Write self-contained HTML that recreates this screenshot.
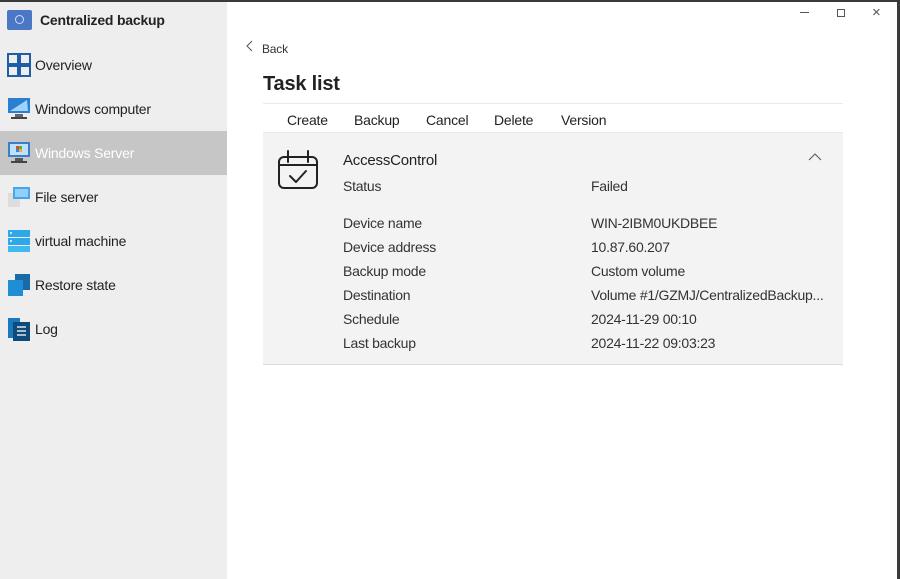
<!DOCTYPE html>
<html><head><meta charset="utf-8"><style>
*{margin:0;padding:0;box-sizing:border-box}
body{width:900px;height:579px;overflow:hidden;background:#3a3a3a;font-family:"Segoe UI","Liberation Sans",sans-serif;position:relative}
#win{position:absolute;left:0;top:2px;width:897px;height:577px;background:#fff}
#side{position:absolute;left:0;top:0;width:227px;height:577px;background:#eeeeee}
.it{position:absolute;left:0;width:227px;height:44px;font-size:14px;color:#222}
.it .t{position:absolute;left:35px;top:14px;letter-spacing:-0.2px}
.it svg{position:absolute;left:7px;top:10px}
.sel{background:#c6c6c6;color:#fff}
.t2{position:absolute;font-size:14px;color:#222;margin-top:2px;letter-spacing:-0.2px}
.lab{position:absolute;left:343px;font-size:14px;color:#333;margin-top:1px;letter-spacing:-0.25px}
.val{position:absolute;left:591px;font-size:14px;color:#333;margin-top:1px;letter-spacing:-0.25px}
</style></head><body>
<div id="win">
<div id="side">
 <div style="position:absolute;left:7px;top:8px;width:25px;height:20px;background:#4a78c5;border-radius:2px"><div style="position:absolute;left:8px;top:5px;width:9px;height:9px;border:1.5px solid #cfe0ff;border-radius:50%"></div></div>
 <div style="position:absolute;left:40px;top:10px;font-size:14px;font-weight:bold;color:#222;letter-spacing:-0.2px">Centralized backup</div>
 <div class="it" style="top:41px"><svg width="24" height="24"><g fill="none" stroke="#1e5ea8" stroke-width="2"><rect x="1" y="1" width="10" height="10"/><rect x="13" y="1" width="10" height="10"/><rect x="1" y="13" width="10" height="10"/><rect x="13" y="13" width="10" height="10"/></g></svg><span class="t">Overview</span></div>
 <div class="it" style="top:85px"><svg width="24" height="24"><rect x="1" y="1" width="22" height="15" fill="#2a7fd0"/><path d="M3 14 L20 3 L21 14Z" fill="#9fd3ff"/><rect x="8" y="17" width="8" height="3" fill="#666"/><rect x="4" y="20" width="16" height="2" fill="#444"/></svg><span class="t">Windows computer</span></div>
 <div class="it sel" style="top:129px"><svg width="24" height="24"><rect x="1" y="1" width="22" height="15" fill="#3a7fc8"/><rect x="3" y="3" width="18" height="11" fill="#bfe0ff"/><rect x="9" y="5" width="3" height="3" fill="#e04a2a"/><rect x="12" y="5" width="3" height="3" fill="#5ab030"/><rect x="9" y="8" width="3" height="3" fill="#2a8ae0"/><rect x="12" y="8" width="3" height="3" fill="#f0b020"/><rect x="8" y="17" width="8" height="3" fill="#555"/><rect x="4" y="20" width="16" height="2" fill="#444"/></svg><span class="t">Windows Server</span></div>
 <div class="it" style="top:173px"><svg width="24" height="24"><rect x="1" y="8" width="12" height="14" fill="#ddd"/><rect x="6" y="2" width="17" height="12" fill="#4aa5e8"/><rect x="8" y="4" width="13" height="8" fill="#8fd0ff"/></svg><span class="t">File server</span></div>
 <div class="it" style="top:217px"><svg width="24" height="24"><rect x="1" y="1" width="22" height="7" fill="#2fa8ea"/><rect x="1" y="9" width="22" height="7" fill="#2fa8ea"/><rect x="1" y="17" width="22" height="6" fill="#40b8f0"/><circle cx="4" cy="4" r="1" fill="#fff"/><circle cx="4" cy="12" r="1" fill="#fff"/></svg><span class="t">virtual machine</span></div>
 <div class="it" style="top:261px"><svg width="24" height="24"><rect x="8" y="1" width="15" height="16" fill="#1a6aa8"/><rect x="1" y="7" width="15" height="16" fill="#1e8ed6"/></svg><span class="t">Restore state</span></div>
 <div class="it" style="top:305px"><svg width="24" height="24"><rect x="1" y="1" width="12" height="20" fill="#1a78c0"/><rect x="6" y="5" width="17" height="19" fill="#0e4a7a"/><g stroke="#fff" stroke-width="1.3"><line x1="10" y1="10" x2="19" y2="10"/><line x1="10" y1="14" x2="19" y2="14"/><line x1="10" y1="18" x2="19" y2="18"/></g></svg><span class="t">Log</span></div>
</div>
<div style="position:absolute;left:800px;top:10px;width:9px;height:1px;background:#555"></div>
<div style="position:absolute;left:837px;top:7px;width:8px;height:8px;border:1px solid #555"></div>
<div class="t2" style="left:872px;top:0px;font-size:15px;color:#555">×</div>
<svg style="position:absolute;left:246px;top:38px" width="8" height="12"><path d="M6 1 L1 6 L6 11" fill="none" stroke="#555" stroke-width="1"/></svg>
<div class="t2" style="left:262px;top:38px;font-size:12px;color:#333">Back</div>
<div class="t2" style="left:263px;top:69px;font-size:20px;font-weight:bold;color:#222">Task list</div>
<div style="position:absolute;left:263px;top:101px;width:580px;height:1px;background:#eaeaea"></div>
<div class="t2" style="left:287px;top:108px">Create</div>
<div class="t2" style="left:354px;top:108px">Backup</div>
<div class="t2" style="left:426px;top:108px">Cancel</div>
<div class="t2" style="left:494px;top:108px">Delete</div>
<div class="t2" style="left:561px;top:108px">Version</div>
<div style="position:absolute;left:263px;top:130px;width:580px;height:233px;background:#f3f3f3;border-top:1px solid #e8e8e8;border-bottom:1px solid #dcdcdc"></div>
<svg style="position:absolute;left:277px;top:147px" width="44" height="42"><g fill="none" stroke="#222" stroke-width="2" stroke-linejoin="round" stroke-linecap="round"><rect x="2" y="8" width="38" height="31" rx="5"/><line x1="2" y1="16" x2="40" y2="16"/><line x1="11" y1="2" x2="11" y2="13"/><line x1="31" y1="2" x2="31" y2="13"/><path d="M13 27 L19 33 L29 22"/></g></svg>
<div class="t2" style="left:343px;top:148px;font-size:15px">AccessControl</div>
<svg style="position:absolute;left:808px;top:151px" width="14" height="8"><path d="M1 7 L7 1 L13 7" fill="none" stroke="#555" stroke-width="1"/></svg>
<div class="lab" style="top:175px">Status</div><div class="val" style="top:175px">Failed</div>
<div class="lab" style="top:212px">Device name</div><div class="val" style="top:212px">WIN-2IBM0UKDBEE</div>
<div class="lab" style="top:236px">Device address</div><div class="val" style="top:236px">10.87.60.207</div>
<div class="lab" style="top:260px">Backup mode</div><div class="val" style="top:260px">Custom volume</div>
<div class="lab" style="top:284px">Destination</div><div class="val" style="top:284px">Volume #1/GZMJ/CentralizedBackup...</div>
<div class="lab" style="top:308px">Schedule</div><div class="val" style="top:308px">2024-11-29 00:10</div>
<div class="lab" style="top:332px">Last backup</div><div class="val" style="top:332px">2024-11-22 09:03:23</div>
</div>
</body></html>
